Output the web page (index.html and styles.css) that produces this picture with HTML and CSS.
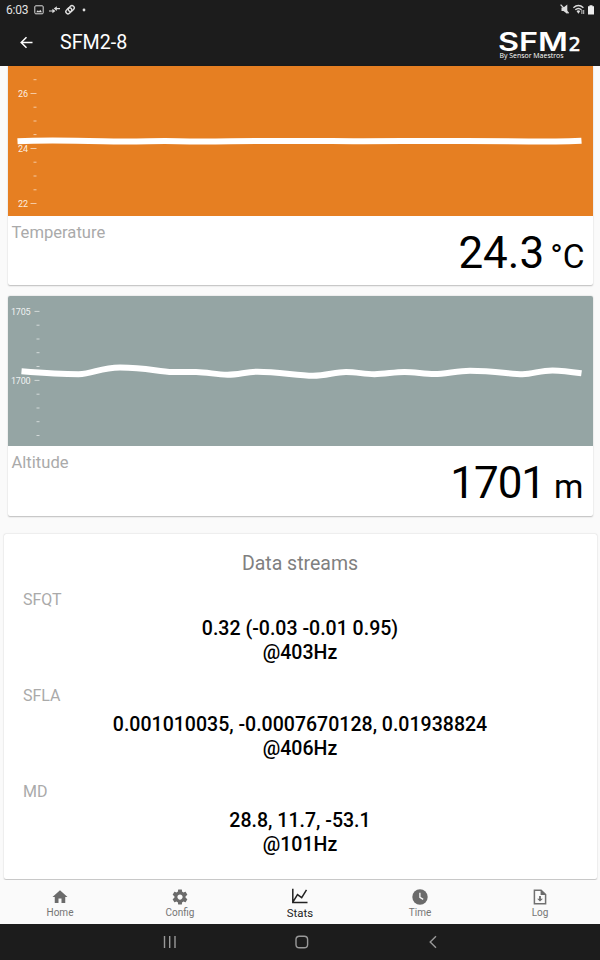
FILE: index.html
```html
<!DOCTYPE html>
<html lang="en">
<head>
    <meta charset="UTF-8">
    <meta name="viewport" content="width=device-width, initial-scale=1.0">
    <title>SFM2-8</title>
    <link rel="stylesheet" href="styles.css">
</head>
<body>
    <div class="screen">
        <!-- Status bar -->
        <div class="status-bar">
            <span class="clock">6:03</span>
            <svg class="status-left" viewBox="0 0 54 12" width="54" height="12" fill="none" stroke="#ddd">
                <rect x="0.8" y="1.8" width="8.4" height="8" rx="1"/>
                <path d="M2.2 8.2l1.6-2 1.2 1.2 1.2-1.6 1.8 2.4z" fill="#ddd" stroke="none"/>
                <path d="M15 7h4.5M21.5 4.6H26" stroke-width="1.1"/>
                <path d="M18.4 4.8v4.4l3-2.2zM22.8 2.3v4.6l-3-2.3z" fill="#ddd" stroke="none"/>
                <rect x="31.5" y="4.6" width="6.6" height="4.4" rx="2.2" transform="rotate(-48 34.8 6.8)" stroke-width="1.4"/>
                <rect x="34" y="2.4" width="6.6" height="4.4" rx="2.2" transform="rotate(-48 37.3 4.6)" stroke-width="1.4"/>
                <circle cx="50" cy="6" r="1.4" fill="#ddd" stroke="none"/>
            </svg>
            <svg class="status-right" viewBox="0 0 36 12" width="36" height="12" fill="none" stroke="#ddd">
                <path d="M1.5 3.6h2L7.3 0.6v9.5L3.5 7h-2z" fill="#ddd" stroke="none"/>
                <path d="M0.6 0.6l8 8.6" stroke-width="1.3"/>
                <path d="M13.4 3.8q5-4.4 10 0M15.3 5.8q3.1-2.8 6.2 0" stroke-width="1.4"/>
                <path d="M16.5 7q1.9-1.6 3.8 0l-1.9 2.8z" fill="#ddd" stroke="none"/>
                <path d="M21.9 6v4M23.7 6v4" stroke-width="0.9"/>
                <path d="M28 2.2h1.5V1.2h3v1H34v8.2h-6z" fill="#eee" stroke="none"/>
            </svg>
        </div>

        <!-- App bar -->
        <header class="app-bar">
            <svg class="back-icon" viewBox="0 0 14 14" width="14" height="14" fill="none" stroke="#fff" stroke-width="1.5">
                <path d="M12.5 6.5H1.5M6.5 1.2L1.2 6.5l5.3 5.3"/>
            </svg>
            <h1>SFM2-8</h1>
            <svg class="logo" viewBox="0 0 84 40" width="84" height="40">
                <text class="logo-name" x="-1" y="28" textLength="70" lengthAdjust="spacingAndGlyphs">SFM</text>
                <text class="logo-number" x="69.5" y="28">2</text>
                <text class="logo-tagline" x="0.5" y="34.5" textLength="64" lengthAdjust="spacingAndGlyphs">By Sensor Maestros</text>
            </svg>
        </header>

        <main class="content">
            <section class="card card-cut">
                <svg class="chart temperature" viewBox="0 66 585 150" width="585" height="150">
                    <path class="tick" d="M25.5 79.7h3M25.5 107.2h3M25.5 121h3M25.5 134.6h3M25.5 162.2h3M25.5 176h3M25.5 189.8h3M22.5 93.5h6M22.5 148.5h6M22.5 203.5h6"/>
                    <g class="axis">
                        <text x="10" y="96.8">26</text>
                        <text x="10" y="151.8">24</text>
                        <text x="10" y="206.8">22</text>
                    </g>
                    <path class="line" d="M9.5 141.2C30 140.2 60 140.4 95 141.2S150 140.6 170 141.3C210 142.2 225 140.7 265 141C310 141.4 320 140.7 345 141.2C380 140.7 410 141 440 141C480 140.8 520 141.3 545 141.6Q560 141.7 573.5 140.8"/>
                </svg>
                <div class="reading">
                    <span class="label">Temperature</span>
                    <span class="value">24.3<span class="unit degree">°C</span></span>
                </div>
            </section>

            <section class="card">
                <svg class="chart altitude" viewBox="0 296 585 150" width="585" height="150">
                    <path class="tick" d="M28.5 325.2h3M28.5 339h3M28.5 352.7h3M28.5 366.5h3M28.5 394.2h3M28.5 408h3M28.5 421.7h3M28.5 435.5h3M26.5 311.4h5M26.5 380.4h5"/>
                    <g class="axis">
                        <text x="3" y="314.8" textLength="19.5">1705</text>
                        <text x="3" y="383.8" textLength="19.5">1700</text>
                    </g>
                    <path class="line" d="M13.5 371.3C30 372.6 55 374.2 70.5 374.2C85 374.2 92 367.4 112 367.4C140 367.4 150 372 165 372H188C200 372.2 208 374.7 219.5 374.7S238 371.7 249.5 371.7C270 371.7 290 375.7 305 375.7C318 375.7 327 372 338 372S356 374.2 366.5 374.2S386 372 396.5 372S416 374 426.5 374S450 370.7 462 370.7C485 370.7 504 374.2 514.5 374.2S532 370.4 544.5 370.4Q555 370.6 573.5 373.2"/>
                </svg>
                <div class="reading">
                    <span class="label">Altitude</span>
                    <span class="value tight">1701<span class="unit metre">m</span></span>
                </div>
            </section>

            <section class="card streams">
                <h2>Data streams</h2>
                <div class="stream">
                    <h3>SFQT</h3>
                    <p>0.32 (-0.03 -0.01 0.95)<br>@403Hz</p>
                </div>
                <div class="stream">
                    <h3>SFLA</h3>
                    <p>0.001010035, -0.0007670128, 0.01938824<br>@406Hz</p>
                </div>
                <div class="stream">
                    <h3>MD</h3>
                    <p>28.8, 11.7, -53.1<br>@101Hz</p>
                </div>
            </section>
        </main>

        <!-- Bottom tabs -->
        <nav class="tabs">
            <a class="tab">
                <svg viewBox="0 0 24 24" width="18" height="18"><path d="M10 20v-6h4v6h5v-8h3L12 3 2 12h3v8z"/></svg>
                <span>Home</span>
            </a>
            <a class="tab">
                <svg viewBox="0 0 24 24" width="18" height="18"><path d="M19.43 12.98c.04-.32.07-.64.07-.98s-.03-.66-.07-.98l2.11-1.65c.19-.15.24-.42.12-.64l-2-3.46c-.12-.22-.39-.3-.61-.22l-2.49 1c-.52-.4-1.08-.73-1.69-.98l-.38-2.65C14.46 2.18 14.25 2 14 2h-4c-.25 0-.46.18-.49.42l-.38 2.65c-.61.25-1.17.59-1.69.98l-2.49-1c-.23-.09-.49 0-.61.22l-2 3.46c-.13.22-.07.49.12.64l2.11 1.65c-.04.32-.07.65-.07.98s.03.66.07.98l-2.11 1.65c-.19.15-.24.42-.12.64l2 3.46c.12.22.39.3.61.22l2.49-1c.52.4 1.08.73 1.69.98l.38 2.65c.03.24.24.42.49.42h4c.25 0 .46-.18.49-.42l.38-2.65c.61-.25 1.17-.59 1.69-.98l2.49 1c.23.09.49 0 .61-.22l2-3.46c.12-.22.07-.49-.12-.64l-2.11-1.65zM12 15.5c-1.93 0-3.5-1.57-3.5-3.5s1.57-3.5 3.5-3.5 3.5 1.57 3.5 3.5-1.57 3.5-3.5 3.5z"/></svg>
                <span>Config</span>
            </a>
            <a class="tab active">
                <svg viewBox="0 0 18 18" width="18" height="18"><path class="stroke" d="M1.8 0.7v13.8H16.5M2.3 13.4L6.5 6.6l4.2 3 4.8-7.8"/></svg>
                <span>Stats</span>
            </a>
            <a class="tab">
                <svg viewBox="0 0 18 18" width="18" height="18"><circle cx="9" cy="9" r="7.7"/><path class="hands" d="M8.9 4.8v4.6l3.3 2"/></svg>
                <span>Time</span>
            </a>
            <a class="tab">
                <svg viewBox="0 0 18 18" width="18" height="18"><path class="stroke" d="M3.4 2.2h6.7l4.5 4.4v9.2H3.4z"/><path d="M9.6 2v5h5zM8.1 8h1.8v2.7h2L9 13.6l-2.9-2.9h2z"/></svg>
                <span>Log</span>
            </a>
        </nav>

        <!-- Android navigation -->
        <div class="system-nav">
            <svg viewBox="0 0 14 14" width="14" height="14"><path d="M1.5 1v12M6.7 1v12M12 1v12"/></svg>
            <svg viewBox="0 0 14 14" width="14" height="14"><rect x="1" y="1.2" width="11.6" height="11.6" rx="3.4"/></svg>
            <svg viewBox="0 0 14 14" width="14" height="14"><path d="M9 1.2L3.2 7 9 12.8"/></svg>
        </div>
    </div>
</body>
</html>
```
FILE: styles.css
```css
/* General Styles */
* {
    box-sizing: border-box;
}

body {
    margin: 0;
    font-family: Roboto, "Liberation Sans", sans-serif;
    background: #fafafa;
    color: #000;
}

.screen {
    width: 600px;
    height: 960px;
    display: flex;
    flex-direction: column;
    overflow: hidden;
}

h1, h2, h3, p {
    margin: 0;
    font-weight: 400;
}

/* Top bars */
.status-bar {
    height: 19px;
    flex: none;
    display: flex;
    align-items: center;
    padding: 0 4px 0 6px;
    background: #1c1c1c;
    color: #e2e2e2;
}

.clock {
    width: 28px;
    font-size: 12px;
    letter-spacing: -0.2px;
}

.status-right {
    margin-left: auto;
}

.app-bar {
    height: 47px;
    flex: none;
    display: flex;
    align-items: center;
    padding: 0 17px 0 20px;
    background: #1c1c1c;
    color: #fff;
}

.app-bar h1 {
    margin-left: 26px;
    font-size: 19.7px;
    line-height: 48px;
}

.logo {
    margin-left: auto;
    fill: #fff;
    overflow: visible;
}

.logo-name {
    font-family: Inter, sans-serif;
    font-size: 25px;
    font-weight: 600;
}

.logo-number {
    font-family: "DejaVu Sans", sans-serif;
    font-size: 19.5px;
    stroke: #fff;
    stroke-width: 0.6;
}

.logo-tagline {
    font-family: "Open Sans", sans-serif;
    font-size: 6.5px;
}

/* Cards */
.content {
    flex: 1;
    padding: 0 3.5px;
}

.card {
    height: 219.5px;
    margin: 0 4px 18px;
    background: #fff;
    border-radius: 2px;
    box-shadow: 0 0.5px 1.5px rgba(0, 0, 0, 0.25);
    overflow: hidden;
}

.card-cut {
    height: 218.5px;
    margin-bottom: 11.5px;
    border-radius: 0 0 2px 2px;
}

.chart {
    display: block;
}

.temperature {
    background: #e67f22;
}

.altitude {
    background: #95a5a4;
}

.tick {
    stroke: rgba(255, 255, 255, 0.65);
    stroke-width: 0.9;
}

.axis {
    fill: #fff;
    fill-opacity: 0.88;
    font-size: 9px;
}

.line {
    fill: none;
    stroke: #fff;
    stroke-width: 6;
}

.reading {
    height: 69px;
    display: flex;
    justify-content: space-between;
    padding: 6px 8px 0 4px;
}

.label {
    font-size: 16.6px;
    line-height: 22px;
    color: #aaa;
}

.value {
    font-size: 44px;
    line-height: 62px;
}

.value.tight {
    letter-spacing: -1px;
}

.unit {
    font-size: 33.5px;
}

.degree {
    margin-left: 6px;
}

.metre {
    margin-left: 9px;
    margin-right: 2px;
}

/* Data streams */
.streams {
    height: 345px;
    margin: 0;
    padding: 18px 19.5px 0;
}

.streams h2 {
    font-size: 19.5px;
    line-height: 24px;
    text-align: center;
    color: #808080;
}

.stream {
    height: 96px;
    padding-top: 14px;
}

.stream h3 {
    font-size: 16px;
    line-height: 20px;
    color: #aaa;
}

.stream p {
    margin-top: 7px;
    font-size: 19.55px;
    font-weight: 500;
    line-height: 24px;
    text-align: center;
}

/* Bottom tabs */
.tabs {
    height: 44px;
    flex: none;
    display: flex;
    background: #fafafa;
}

.tab {
    flex: 1;
    display: flex;
    flex-direction: column;
    align-items: center;
    padding-top: 8px;
    color: #757575;
    font-size: 10px;
    line-height: 14px;
}

.tab svg {
    fill: #6b6b6b;
}

.tab .stroke {
    fill: none;
    stroke: #707070;
    stroke-width: 1.5;
}

.tab .hands {
    fill: none;
    stroke: #fafafa;
    stroke-width: 1.3;
}

.tab.active {
    color: #222;
    font-size: 11.4px;
}

.tab.active .stroke {
    stroke: #222;
}

/* Android navigation */
.system-nav {
    height: 36px;
    flex: none;
    display: flex;
    justify-content: center;
    align-items: center;
    gap: 118px;
    padding-left: 3px;
    background: #1c1c1c;
}

.system-nav svg {
    fill: none;
    stroke: #999;
    stroke-width: 1.4;
}
```
